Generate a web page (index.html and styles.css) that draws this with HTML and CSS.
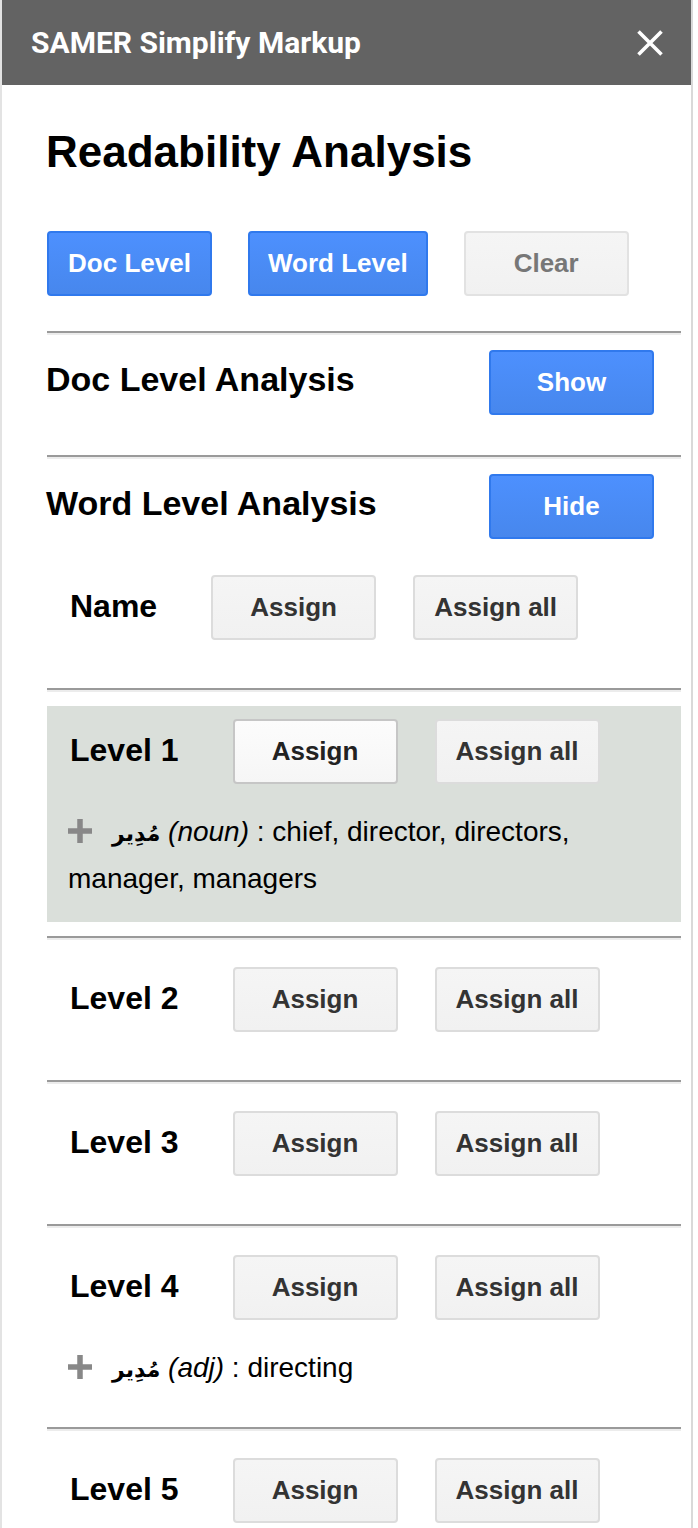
FILE: index.html
```html
<!DOCTYPE html>
<html lang="en">
<head>
<meta charset="utf-8">
<title>SAMER Simplify Markup</title>
<link rel="stylesheet" href="styles.css">
</head>
<body>
<div class="panel">
  <header class="titlebar">
    <span class="titlebar-title">SAMER Simplify Markup</span>
    <svg class="close" viewBox="0 0 26 26" aria-label="Close"><path d="M1.5 1.5L24.5 24.5M24.5 1.5L1.5 24.5" stroke="#fff" stroke-width="3.6" fill="none"/></svg>
  </header>
  <main class="content">
    <h1 class="page-title">Readability Analysis</h1>
    <div class="btn-row">
      <button class="btn btn-blue">Doc Level</button>
      <button class="btn btn-blue">Word Level</button>
      <button class="btn btn-disabled">Clear</button>
    </div>
    <hr class="sep">
    <div class="section-head section-doc">
      <h2 class="section-title">Doc Level Analysis</h2>
      <button class="btn btn-blue">Show</button>
    </div>
    <hr class="sep">
    <div class="section-head">
      <h2 class="section-title">Word Level Analysis</h2>
      <button class="btn btn-blue">Hide</button>
    </div>
    <div class="level name-row">
      <div class="level-head">
        <span class="level-label">Name</span>
        <button class="btn">Assign</button>
        <button class="btn">Assign all</button>
      </div>
    </div>
    <hr class="sep">
    <div class="level active">
      <div class="level-head">
        <span class="level-label">Level 1</span>
        <button class="btn btn-focus">Assign</button>
        <button class="btn">Assign all</button>
      </div>
      <div class="words">
        <p class="word"><svg class="plus" viewBox="0 0 24 24"><path d="M12 0V24M0 12H24" stroke="#888" stroke-width="5.5"/></svg><bdi class="ar" dir="rtl">مُدِير</bdi> <i>(noun)</i> : chief, director, directors, manager, managers</p>
      </div>
    </div>
    <hr class="sep">
    <div class="level">
      <div class="level-head">
        <span class="level-label">Level 2</span>
        <button class="btn">Assign</button>
        <button class="btn">Assign all</button>
      </div>
    </div>
    <hr class="sep">
    <div class="level">
      <div class="level-head">
        <span class="level-label">Level 3</span>
        <button class="btn">Assign</button>
        <button class="btn">Assign all</button>
      </div>
    </div>
    <hr class="sep">
    <div class="level">
      <div class="level-head">
        <span class="level-label">Level 4</span>
        <button class="btn">Assign</button>
        <button class="btn">Assign all</button>
      </div>
      <div class="words">
        <p class="word"><svg class="plus" viewBox="0 0 24 24"><path d="M12 0V24M0 12H24" stroke="#888" stroke-width="5.5"/></svg><bdi class="ar" dir="rtl">مُدِير</bdi> <i>(adj)</i> : directing</p>
      </div>
    </div>
    <hr class="sep">
    <div class="level">
      <div class="level-head">
        <span class="level-label">Level 5</span>
        <button class="btn">Assign</button>
        <button class="btn">Assign all</button>
      </div>
    </div>
  </main>
</div>
</body>
</html>
```

FILE: styles.css
```css
* { box-sizing: border-box; }
html, body { margin: 0; padding: 0; background: #fff; }
body { font-family: "Liberation Sans", Arial, sans-serif; color: #000; }

.panel {
  width: 693px;
  min-height: 1528px;
  border-left: 2px solid #e3e3e3;
  border-right: 2px solid #d9d9d9;
}

.titlebar {
  height: 85px;
  background: #636363;
  display: flex;
  align-items: center;
  justify-content: space-between;
  padding: 0 28px 0 29px;
}
.titlebar-title {
  font-family: Roboto, "Liberation Sans", sans-serif;
  font-weight: 700;
  font-size: 30px;
  color: #fff;
}
.close { width: 26px; height: 26px; display: block; }

.content { padding: 0 10px 0 45px; }

.page-title {
  margin: 42px 0 0 -1px;
  font-size: 44px;
  line-height: 50px;
  font-weight: 700;
}

.btn-row {
  display: flex;
  gap: 36px;
  margin: 54px 0 35px;
}

.btn {
  height: 65px;
  min-width: 165px;
  padding: 0 18px;
  border: 2px solid #dcdcdc;
  border-radius: 4px;
  background: linear-gradient(#f5f5f5, #f1f1f1);
  color: #333;
  font-family: inherit;
  font-size: 26px;
  font-weight: 700;
}
.btn-blue {
  background: linear-gradient(#4d90fe, #4787ed);
  border-color: #3079ed;
  color: #fff;
}
.btn-disabled { color: #777; border-color: #e2e2e2; }
.btn-focus {
  background: linear-gradient(#fcfcfc, #f6f6f6);
  border-color: #c6c6c6;
  color: #222;
}

.sep {
  margin: 0;
  height: 4px;
  border: 0;
  border-top: 2px solid #9a9a9a;
  border-bottom: 2px solid #ececec;
}

.section-head {
  display: flex;
  align-items: center;
  justify-content: space-between;
  padding: 15px 27px 0 0;
}
.section-doc { padding-bottom: 40px; }
.section-title {
  margin: 0 0 0 -1px;
  padding-bottom: 8px;
  font-size: 34px;
  line-height: 40px;
  font-weight: 700;
}

.level {
  margin: 14px 0;
  padding: 13px 21px 21px;
}
.name-row { margin-top: 23px; }
.level.active { background: #dadfda; }

.level-head {
  display: flex;
  align-items: center;
  padding-bottom: 13px;
}
.level-label {
  font-size: 32px;
  line-height: 40px;
  font-weight: 700;
  padding-bottom: 4px;
  margin: 0 54px 0 2px;
}
.level-head .btn + .btn { margin-left: 37px; }

.words {
  margin-top: 12px;
  font-size: 28px;
  line-height: 45px;
}
.word { margin: 0; }
.plus {
  width: 24px;
  height: 24px;
  vertical-align: -2px;
  margin: 0 20px 0 0;
}
.ar {
  font-family: "DejaVu Sans", sans-serif;
  font-weight: 700;
  font-size: 22px;
}
```
